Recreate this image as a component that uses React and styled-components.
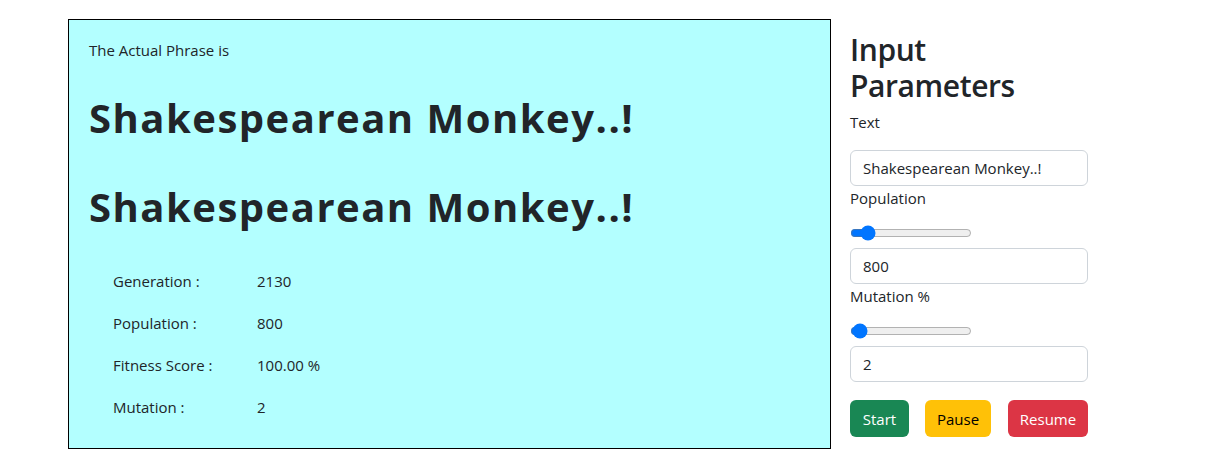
import React, { useState } from "react";
import styled, { createGlobalStyle } from "styled-components";

const GlobalStyle = createGlobalStyle`
  * { box-sizing: border-box; }
  body {
    margin: 0;
    background: #fff;
    color: #212529;
    font-family: "Open Sans", "Noto Sans", sans-serif;
    font-size: 15px;
  }
`;

const Page = styled.div`
  display: flex;
  align-items: flex-start;
  gap: 19px;
  padding: 19px 0 0 68px;
`;

const Board = styled.div`
  width: 763px;
  height: 430px;
  padding: 20px;
  border: 1px solid #000;
  background: #b3ffff;
`;

const Caption = styled.p`
  margin: 0 0 34px;
  line-height: 20px;
`;

const Phrase = styled.h1`
  margin: 0 0 41px;
  font-size: 40px;
  font-weight: 700;
  line-height: 48px;
  letter-spacing: 1.5px;
  white-space: nowrap;

  &:last-of-type {
    margin-bottom: 38px;
  }
`;

const Stats = styled.div`
  display: grid;
  grid-template-columns: 144px 1fr;
  row-gap: 18px;
  padding-left: 24px;
  line-height: 24px;
`;

const Side = styled.div`
  width: 238px;
  padding-top: 13px;
  display: flex;
  flex-direction: column;
`;

const Title = styled.h2`
  margin: 0 0 6px;
  font-size: 30px;
  font-weight: 600;
  line-height: 36px;
  letter-spacing: -0.4px;
`;

const Label = styled.label`
  display: block;
  line-height: 24px;
  margin-bottom: ${p => (p.gap ? p.gap : 0)}px;
`;

const Input = styled.input`
  display: block;
  width: 100%;
  height: 36px;
  padding: 0 12px;
  border: 1px solid #ced4da;
  border-radius: 6px;
  font-family: inherit;
  font-size: 15px;
  color: #212529;
  background: #fff;
  outline: none;
`;

const RangeWrap = styled.div`
  padding: 15px 0 7px;
`;

const Range = styled.input`
  display: block;
  width: 122px;
  height: 16px;
  margin: 0;
`;

const Buttons = styled.div`
  display: flex;
  justify-content: space-between;
  margin-top: 18px;
`;

const palette = {
  success: { bg: "#198754", fg: "#fff" },
  warning: { bg: "#ffc107", fg: "#000" },
  danger: { bg: "#dc3545", fg: "#fff" }
};

const Button = styled.button`
  width: ${p => p.w}px;
  height: 37px;
  padding: 0;
  border: none;
  border-radius: 6px;
  font-family: inherit;
  font-size: 15px;
  background: ${p => palette[p.kind].bg};
  color: ${p => palette[p.kind].fg};
  cursor: pointer;
`;

const ButtonSlot = styled.div`
  display: flex;
  gap: 16px;
`;

const stats = [
  ["Generation :", "2130"],
  ["Population :", "800"],
  ["Fitness Score :", "100.00 %"],
  ["Mutation :", "2"]
];

export default function App() {
  const [text, setText] = useState("Shakespearean Monkey..!");
  const [population, setPopulation] = useState(800);
  const [mutation, setMutation] = useState(2);

  return (
    <Page>
      <GlobalStyle />
      <Board>
        <Caption>The Actual Phrase is</Caption>
        <Phrase>Shakespearean Monkey..!</Phrase>
        <Phrase>Shakespearean Monkey..!</Phrase>
        <Stats>
          {stats.map(([k, v]) => (
            <React.Fragment key={k}>
              <span>{k}</span>
              <span>{v}</span>
            </React.Fragment>
          ))}
        </Stats>
      </Board>
      <Side>
        <Title>Input Parameters</Title>
        <Label gap={16}>Text</Label>
        <Input value={text} onChange={e => setText(e.target.value)} />
        <Label>Population</Label>
        <RangeWrap>
          <Range
            type="range"
            min="0"
            max="8500"
            value={population}
            onChange={e => setPopulation(e.target.value)}
          />
        </RangeWrap>
        <Input value={population} onChange={e => setPopulation(e.target.value)} />
        <Label>Mutation %</Label>
        <RangeWrap>
          <Range
            type="range"
            min="0"
            max="100"
            value={mutation}
            onChange={e => setMutation(e.target.value)}
          />
        </RangeWrap>
        <Input value={mutation} onChange={e => setMutation(e.target.value)} />
        <Buttons>
          <ButtonSlot>
            <Button kind="success" w={59}>Start</Button>
            <Button kind="warning" w={66}>Pause</Button>
          </ButtonSlot>
          <Button kind="danger" w={80}>Resume</Button>
        </Buttons>
      </Side>
    </Page>
  );
}
